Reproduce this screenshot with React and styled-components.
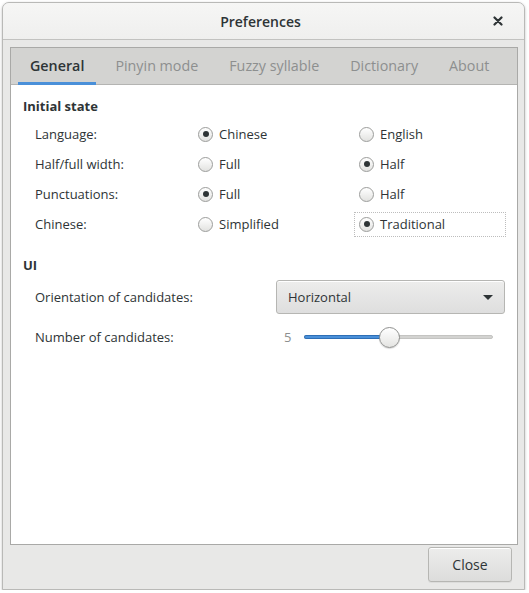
import React, { useState } from "react";
import styled, { createGlobalStyle } from "styled-components";

const Global = createGlobalStyle`
  html, body {
    margin: 0;
    padding: 0;
    background: #ffffff;
  }
  body {
    font-family: "Open Sans", "Noto Sans", sans-serif;
    font-size: 13px;
    color: #2e3436;
  }
`;

const Window = styled.div`
  box-sizing: border-box;
  margin: 2px 0 0 2px;
  width: 523px;
  height: 588px;
  display: flex;
  flex-direction: column;
  background: #e8e8e7;
  border: 1px solid #b9b9b7;
  border-radius: 7px 7px 0 0;
  box-shadow: 0 1px 3px rgba(0, 0, 0, 0.25);
  overflow: hidden;
`;

const TitleBar = styled.div`
  height: 36px;
  flex: none;
  display: grid;
  grid-template-columns: 1fr auto 1fr;
  align-items: center;
  background: linear-gradient(#f6f6f5, #efefee);
  border-bottom: 1px solid #c2c2c0;
  h1 {
    grid-column: 2;
    margin: 0 0 0 -6px;
    font-size: 14px;
    font-weight: 600;
    color: #2e3436;
  }
`;

const CloseX = styled.button`
  grid-column: 3;
  justify-self: end;
  margin-right: 18px;
  border: none;
  background: none;
  padding: 0;
  width: 16px;
  height: 16px;
  display: flex;
  align-items: center;
  justify-content: center;
  color: #2e3436;
`;

const Body = styled.div`
  flex: 1;
  display: flex;
  flex-direction: column;
  padding: 7px 6px 7px 7px;
  gap: 2px;
`;

const Notebook = styled.div`
  flex: 1;
  display: flex;
  flex-direction: column;
  border: 1px solid #a9a9a7;
  background: #ffffff;
`;

const TabStrip = styled.div`
  height: 36px;
  flex: none;
  display: flex;
  align-items: stretch;
  padding-left: 7px;
  gap: 7px;
  background: #d3d3d1;
  border-bottom: 1px solid #b4b4b2;
`;

const Tab = styled.div`
  display: flex;
  align-items: center;
  padding: 1px 12px 0;
  font-size: 14.3px;
  font-weight: ${(p) => (p.$active ? 600 : 500)};
  color: ${(p) => (p.$active ? "#2e3436" : "#8d8f8f")};
  border-bottom: 3px solid ${(p) => (p.$active ? "#4a90d9" : "transparent")};
  margin-bottom: -1px;
`;

const Page = styled.div`
  flex: 1;
  padding: 6px 12px;
`;

const SectionTitle = styled.h2`
  margin: ${(p) => p.$top}px 0 4px;
  font-size: 13px;
  font-weight: 700;
  color: #2e3436;
`;

const OptionGrid = styled.div`
  display: grid;
  grid-template-columns: 157px 162px 152px;
  grid-auto-rows: 30px;
  align-items: center;
  padding-left: 12px;
`;

const Label = styled.div`
  font-size: 13px;
`;

const Choice = styled.label`
  display: flex;
  align-items: center;
  gap: 6px;
  height: 25px;
  padding-left: ${(p) => p.$pad}px;
  box-sizing: border-box;
  outline: ${(p) => (p.$focus ? "1px dotted #bdbdbd" : "none")};
  outline-offset: -1px;
  cursor: default;
`;

const RadioDot = styled.span`
  box-sizing: border-box;
  width: 15px;
  height: 15px;
  border-radius: 50%;
  border: 1px solid #9c9d9b;
  background: linear-gradient(#ffffff, #e2e2e0);
  display: flex;
  align-items: center;
  justify-content: center;
  &::after {
    content: "";
    width: 6px;
    height: 6px;
    border-radius: 50%;
    background: #2e3436;
    display: ${(p) => (p.$on ? "block" : "none")};
  }
`;

const UiGrid = styled.div`
  display: grid;
  grid-template-columns: 241px 229px;
  align-items: center;
  row-gap: 9px;
  padding-left: 12px;
  margin-top: 6px;
`;

const Combo = styled.div`
  box-sizing: border-box;
  height: 34px;
  display: flex;
  align-items: center;
  justify-content: space-between;
  padding: 0 11px 0 11px;
  border: 1px solid #b6b6b3;
  border-radius: 3px;
  background: linear-gradient(#ededec, #dedede);
  box-shadow: inset 0 1px #ffffff;
  font-size: 13px;
`;

const Caret = styled.span`
  width: 0;
  height: 0;
  border-left: 5px solid transparent;
  border-right: 5px solid transparent;
  border-top: 5px solid #2e3436;
`;

const SliderRow = styled.div`
  display: flex;
  align-items: center;
  height: 28px;
  padding-left: 8px;
  gap: 13px;
  span {
    color: #8d8f8f;
    font-size: 13px;
  }
`;

const Track = styled.div`
  position: relative;
  width: 189px;
  height: 4px;
  border-radius: 2px;
  background: #d3d3d1;
  border: 1px solid #c4c4c2;
  box-sizing: border-box;
`;

const Fill = styled.div`
  height: 100%;
  border-radius: 2px;
  background: #4a90d9;
  box-shadow: 0 0 0 1px #2e6fb6;
`;

const Thumb = styled.div`
  position: absolute;
  top: 50%;
  width: 19px;
  height: 19px;
  margin: -10px 0 0 -10px;
  border-radius: 50%;
  border: 1px solid #8f908e;
  background: linear-gradient(#ffffff, #e4e4e2);
  box-shadow: 0 1px 1px rgba(0, 0, 0, 0.15);
`;

const Footer = styled.div`
  display: flex;
  justify-content: flex-end;
  padding-right: 6px;
`;

const Button = styled.button`
  width: 84px;
  height: 35px;
  border: 1px solid #b6b6b3;
  border-radius: 3px;
  background: linear-gradient(#ededec, #dcdcdb);
  box-shadow: inset 0 1px #ffffff, 0 1px rgba(0, 0, 0, 0.05);
  font-family: inherit;
  font-size: 14px;
  color: #2e3436;
`;

const rows = [
  { label: "Language:", a: "Chinese", b: "English", pick: "a" },
  { label: "Half/full width:", a: "Full", b: "Half", pick: "b" },
  { label: "Punctuations:", a: "Full", b: "Half", pick: "a" },
  { label: "Chinese:", a: "Simplified", b: "Traditional", pick: "b", focus: true },
];

const tabs = ["General", "Pinyin mode", "Fuzzy syllable", "Dictionary", "About"];

export default function App() {
  const [state, setState] = useState(rows.map((r) => r.pick));
  const count = 5;
  const pct = ((count - 1) / 9) * 100;

  return (
    <>
      <Global />
      <Window>
        <TitleBar>
          <h1>Preferences</h1>
          <CloseX aria-label="Close">
            <svg width="10" height="10" viewBox="0 0 10 10">
              <path d="M1.5 1.5 L8.5 8.5 M8.5 1.5 L1.5 8.5" stroke="#2e3436" strokeWidth="2.2" strokeLinecap="round" />
            </svg>
          </CloseX>
        </TitleBar>
        <Body>
          <Notebook>
            <TabStrip>
              {tabs.map((t, i) => (
                <Tab key={t} $active={i === 0}>
                  {t}
                </Tab>
              ))}
            </TabStrip>
            <Page>
              <SectionTitle $top={6}>Initial state</SectionTitle>
              <OptionGrid>
                {rows.map((r, i) => (
                  <React.Fragment key={r.label}>
                    <Label>{r.label}</Label>
                    <Choice $pad={6} onClick={() => setState((s) => s.map((v, j) => (j === i ? "a" : v)))}>
                      <RadioDot $on={state[i] === "a"} />
                      {r.a}
                    </Choice>
                    <Choice
                      $pad={5}
                      $focus={r.focus}
                      onClick={() => setState((s) => s.map((v, j) => (j === i ? "b" : v)))}
                    >
                      <RadioDot $on={state[i] === "b"} />
                      {r.b}
                    </Choice>
                  </React.Fragment>
                ))}
              </OptionGrid>
              <SectionTitle $top={17}>UI</SectionTitle>
              <UiGrid>
                <Label>Orientation of candidates:</Label>
                <Combo>
                  Horizontal
                  <Caret />
                </Combo>
                <Label>Number of candidates:</Label>
                <SliderRow>
                  <span>{count}</span>
                  <Track>
                    <Fill style={{ width: `${pct}%` }} />
                    <Thumb style={{ left: `${pct}%` }} />
                  </Track>
                </SliderRow>
              </UiGrid>
            </Page>
          </Notebook>
          <Footer>
            <Button>Close</Button>
          </Footer>
        </Body>
      </Window>
    </>
  );
}
